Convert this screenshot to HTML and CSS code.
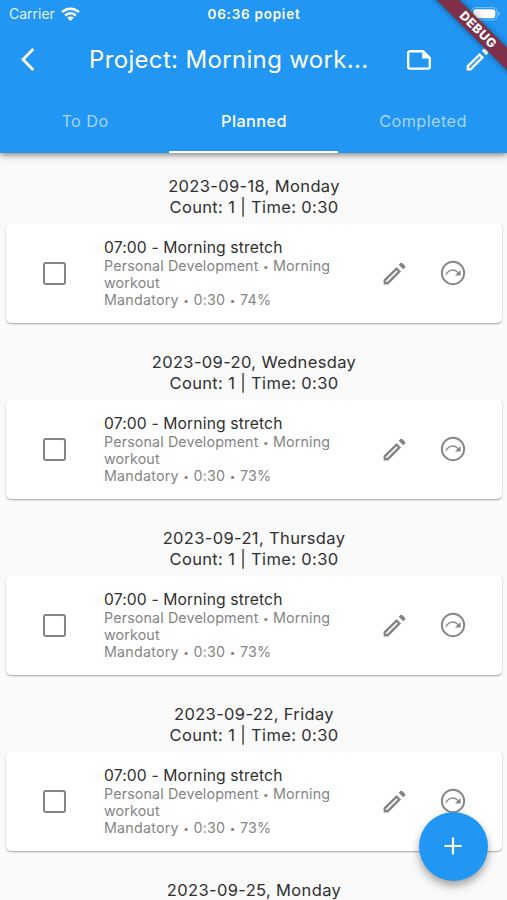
FILE: index.html
```html
<!DOCTYPE html>
<html lang="en">
<head>
<meta charset="utf-8">
<title>Project: Morning workout</title>
<link rel="stylesheet" href="styles.css">
</head>
<body>
<svg class="defs" width="0" height="0" aria-hidden="true">
  <symbol id="edit" viewBox="0 0 24 24"><path d="M13.7 9.38l.92.92L5.92 19H5v-.92l8.7-8.7M17.66 3c-.25 0-.51.1-.7.29l-1.53 1.53 3.75 3.75 1.53-1.53c.39-.39.39-1.02 0-1.41l-2.34-2.34c-.2-.2-.45-.29-.71-.29zm-3.96 3.55L3 17.25V21h3.75l10.7-10.7-3.75-3.75z"/></symbol>
  <symbol id="skip" viewBox="0 0 26 26"><circle cx="13" cy="13" r="11.2" fill="none" stroke="currentColor" stroke-width="1.9"/><path d="M6 14.6C8.7 9.1 14.6 8.7 18 12.6" fill="none" stroke="currentColor" stroke-width="1.4"/><path d="M20.6 10v5.6H15z"/></symbol>
</svg>
<div class="screen">
  <header class="appbar">
    <div class="status">
      <div class="carrier"><span>Carrier</span>
        <svg class="wifi" viewBox="0 0 19 14"><g fill="none" stroke="#fff" stroke-width="2.5"><path d="M1.1 5.2a12 12 0 0 1 16.8 0"/><path d="M4.2 8.5a7.6 7.6 0 0 1 10.6 0"/></g><path d="M6.3 10.8a4.6 4.6 0 0 1 6.4 0L9.5 14z" fill="#fff"/></svg>
      </div>
      <span class="clock">06:36 popiet</span>
      <svg class="battery" viewBox="0 0 30 14"><rect x=".6" y=".6" width="25.5" height="12.4" rx="3.6" fill="none" stroke="#fff" stroke-opacity=".4"/><rect x="2.3" y="2.3" width="22" height="9" rx="2.2" fill="#fff"/><path d="M27.4 4.6c2 .7 2 3.7 0 4.4z" fill="#fff" fill-opacity=".45"/></svg>
    </div>
    <div class="toolbar">
      <svg class="back" viewBox="0 0 12 24"><path d="M11.4 3.87L9.7 2.2 0 12l9.7 9.8 1.7-1.67L3.4 12z"/></svg>
      <h1>Project: Morning work...</h1>
      <svg class="note" viewBox="0 0 26 22"><path d="M17 2.2H4.2a2 2 0 0 0-2 2v13.4a2 2 0 0 0 2 2h17.6a2 2 0 0 0 2-2V9z" fill="none" stroke="#fff" stroke-width="2.4" stroke-linejoin="round"/><path d="M16.2 2v7.6H24z"/></svg>
      <svg class="icon edit-top"><use href="#edit"/></svg>
    </div>
    <nav class="tabs"><span>To Do</span><span class="active">Planned</span><span>Completed</span></nav>
  </header>
  <main>
    <section>
      <h2>2023-09-18, Monday<span>Count: 1 | Time: 0:30</span></h2>
      <article><i class="box"></i><div class="info"><b>07:00 - Morning stretch</b><p>Personal Development <s>•</s> Morning<br>workout</p><p class="meta">Mandatory <s>•</s> 0:30 <s>•</s> 74%</p></div><svg class="icon pen"><use href="#edit"/></svg><svg class="skip"><use href="#skip"/></svg></article>
    </section>
    <section>
      <h2>2023-09-20, Wednesday<span>Count: 1 | Time: 0:30</span></h2>
      <article><i class="box"></i><div class="info"><b>07:00 - Morning stretch</b><p>Personal Development <s>•</s> Morning<br>workout</p><p class="meta">Mandatory <s>•</s> 0:30 <s>•</s> 73%</p></div><svg class="icon pen"><use href="#edit"/></svg><svg class="skip"><use href="#skip"/></svg></article>
    </section>
    <section>
      <h2>2023-09-21, Thursday<span>Count: 1 | Time: 0:30</span></h2>
      <article><i class="box"></i><div class="info"><b>07:00 - Morning stretch</b><p>Personal Development <s>•</s> Morning<br>workout</p><p class="meta">Mandatory <s>•</s> 0:30 <s>•</s> 73%</p></div><svg class="icon pen"><use href="#edit"/></svg><svg class="skip"><use href="#skip"/></svg></article>
    </section>
    <section>
      <h2>2023-09-22, Friday<span>Count: 1 | Time: 0:30</span></h2>
      <article><i class="box"></i><div class="info"><b>07:00 - Morning stretch</b><p>Personal Development <s>•</s> Morning<br>workout</p><p class="meta">Mandatory <s>•</s> 0:30 <s>•</s> 73%</p></div><svg class="icon pen"><use href="#edit"/></svg><svg class="skip"><use href="#skip"/></svg></article>
    </section>
    <section><h2>2023-09-25, Monday</h2></section>
  </main>
  <div class="fab"><svg viewBox="0 0 18 18"><path d="M9 .5v17M.5 9h17" stroke="#fff" stroke-width="2.2"/></svg></div>
  <div class="banner">DEBUG</div>
</div>
</body>
</html>
```
FILE: styles.css
```css
* { box-sizing: border-box; margin: 0; padding: 0; }
body { font-family: Inter, "Liberation Sans", sans-serif; background: #fafafa; }
svg { display: block; fill: currentColor; flex: none; }
.defs { position: absolute; }
.screen { position: relative; width: 507px; height: 900px; overflow: hidden; background: #fafafa; }
.appbar { position: relative; height: 152.5px; background: #2196f3; color: #fff; box-shadow: 0 2px 5px rgba(0,0,0,.36), 0 4px 9px rgba(0,0,0,.12); }
.status { display: grid; grid-template-columns: 1fr auto 1fr; align-items: center; height: 27px; padding: 0 8px 0 9px; }
.carrier { display: flex; align-items: center; gap: 6px; font-size: 14px; color: #e4f2fe; }
.wifi { width: 19px; height: 14px; }
.clock { font-size: 13.5px; font-weight: 600; letter-spacing: .75px; }
.battery { width: 30px; height: 14px; margin-right: -2px; justify-self: end; }
.toolbar { display: flex; align-items: center; height: 65px; padding-left: 21px; }
.back { width: 14px; height: 29px; }
h1 { width: 316px; padding-left: 54px; font-size: 24px; font-weight: 400; letter-spacing: .34px; white-space: nowrap; }
.note { width: 26px; height: 22px; margin-left: 55px; }
.icon { width: 29px; height: 29px; }
.edit-top { margin-left: 31px; }
.tabs { display: grid; grid-template-columns: repeat(3, 1fr); height: 60.5px; font-size: 16.3px; letter-spacing: .4px; text-align: center; line-height: 59px; }
.tabs span { padding-left: 1px; color: rgba(255,255,255,.6); font-weight: 400; }
.tabs .active { color: #fff; font-weight: 500; border-bottom: 2.5px solid #fff; letter-spacing: .4px; }
main { padding-top: 23.5px; }
section { height: 176px; padding: 0 5px 0 6px; }
h2 { height: 47px; font-size: 16.5px; font-weight: 400; line-height: 21px; letter-spacing: .35px; text-align: center; color: #303030; }
h2 span { display: block; }
article { display: flex; align-items: center; height: 100px; background: #fff; border-radius: 5px; color: #858585; box-shadow: 0 1px 2px rgba(0,0,0,.26), 0 1px 1px rgba(0,0,0,.1); }
.box { width: 23px; height: 23px; margin-left: 37px; border: 2.4px solid #858585; border-radius: 3px; }
.info { width: 240px; margin: -2px 0 0 38px; font-size: 14.3px; letter-spacing: .12px; line-height: 17px; white-space: nowrap; }
.info b { display: block; padding-top: 1px; font-size: 15.7px; font-weight: 400; line-height: 19px; letter-spacing: .12px; color: #303030; }
.info .meta { letter-spacing: .2px; }
.info s { display: inline-block; width: 6.3px; font-size: 10px; line-height: 1; text-align: center; text-decoration: none; vertical-align: 1px; }
.pen { margin-left: 36px; }
.skip { width: 26px; height: 26px; margin-left: 31px; }
.fab { position: absolute; left: 418.5px; top: 811.5px; display: flex; align-items: center; justify-content: center; width: 69px; height: 69px; border-radius: 50%; background: #2196f3; box-shadow: 0 4px 7px rgba(0,0,0,.24), 0 6px 12px rgba(0,0,0,.14); }
.fab svg { width: 18px; height: 18px; }
.banner { position: absolute; left: 418px; top: 22px; width: 120px; height: 16px; transform: rotate(45deg); background: #7d3048; color: #fff; box-shadow: 0 0 6px rgba(0,0,0,.45); font-size: 12.5px; font-weight: 800; line-height: 16px; letter-spacing: .6px; text-align: center; }
```
